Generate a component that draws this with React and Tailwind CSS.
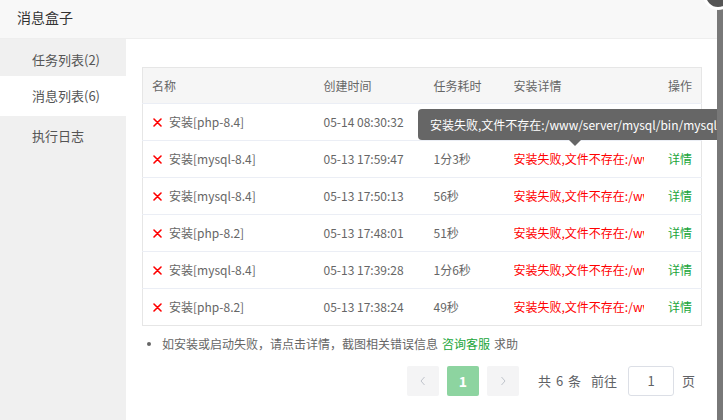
const rows = [
  { name: '安装[php-8.4]', time: '05-14 08:30:32', cost: '2秒' },
  { name: '安装[mysql-8.4]', time: '05-13 17:59:47', cost: '1分3秒' },
  { name: '安装[mysql-8.4]', time: '05-13 17:50:13', cost: '56秒' },
  { name: '安装[php-8.2]', time: '05-13 17:48:01', cost: '51秒' },
  { name: '安装[mysql-8.4]', time: '05-13 17:39:28', cost: '1分6秒' },
  { name: '安装[php-8.2]', time: '05-13 17:38:24', cost: '49秒' },
];

const ERR = '安装失败,文件不存在:/www/server/mysql/bin/mysql';

function Cross() {
  return (
    <svg width="9" height="9" viewBox="0 0 9 9" className="shrink-0">
      <path d="M1 1l7 7M8 1l-7 7" stroke="#f00" strokeWidth="1.6" strokeLinecap="round" />
    </svg>
  );
}

export default function App() {
  const font = { fontFamily: '"Noto Sans CJK SC", "Liberation Sans", sans-serif' };
  return (
    <div className="relative w-[723px] h-[420px] flex bg-[#787878] overflow-hidden" style={font}>
      {/* dialog */}
      <div className="relative w-[717px] h-full bg-white flex flex-col overflow-hidden">
        <div className="h-[39px] shrink-0 bg-[#f8f8f8] border-b border-[#eeeeee] flex items-center pl-[17px] pb-[3px] text-[14px] text-[#333]">
          消息盒子
        </div>

        <div className="flex flex-1 min-h-0">
          {/* sidebar */}
          <div className="w-[126px] shrink-0 bg-[#f0f0f0] text-[13px] text-[#555]">
            <div className="h-[37px] flex items-center pl-[32px] pt-[4px]">任务列表(2)</div>
            <div className="h-[40px] flex items-center pl-[32px] bg-white">消息列表(6)</div>
            <div className="h-[40px] flex items-center pl-[32px]">执行日志</div>
          </div>

          {/* content */}
          <div className="flex-1 pl-[16px] pr-[15px] pt-[28px]">
            <table className="w-[559px] table-fixed border-collapse border border-[#e6e6e6] text-[12px] text-[#666]">
              <colgroup>
                <col className="w-[172px]" />
                <col className="w-[110px]" />
                <col className="w-[80px]" />
                <col className="w-[148px]" />
                <col className="w-[49px]" />
              </colgroup>
              <thead>
                <tr className="h-[36px] bg-[#f6f6f6]">
                  <th className="text-left font-normal pl-[9px]">名称</th>
                  <th className="text-left font-normal pl-[9px]">创建时间</th>
                  <th className="text-left font-normal pl-[9px]">任务耗时</th>
                  <th className="text-left font-normal pl-[9px]">安装详情</th>
                  <th className="text-right font-normal pr-[9px]">操作</th>
                </tr>
              </thead>
              <tbody>
                {rows.map((r, i) => (
                  <tr key={i} className="h-[37px] border-t border-[#ebeef5]">
                    <td className="pl-[10px]">
                      <div className="flex items-center gap-[7px]">
                        <Cross />
                        <span>{r.name}</span>
                      </div>
                    </td>
                    <td className="pl-[9px] whitespace-nowrap">{r.time}</td>
                    <td className="pl-[9px]">{r.cost}</td>
                    <td className="pl-[9px] pr-[9px]">
                      <div className="overflow-hidden whitespace-nowrap text-[#ff0000]">{ERR}</div>
                    </td>
                    <td className="text-right pr-[9px] text-[#20a53a]">详情</td>
                  </tr>
                ))}
              </tbody>
            </table>

            <div className="mt-[10px] flex items-center h-[16px] text-[12px] text-[#666] pl-[5px]">
              <span className="w-[4px] h-[4px] rounded-full bg-[#666] mr-[11px]" />
              <span>如安装或启动失败，请点击详情，截图相关错误信息</span>
              <span className="text-[#20a53a] ml-[4px]">咨询客服</span>
              <span className="ml-[4px]">求助</span>
            </div>

            <div className="mt-[14px] flex items-center h-[30px] text-[13px] text-[#606266] pl-[265px]">
              <div className="w-[32px] h-[30px] rounded-[2px] bg-[#f4f4f5] flex items-center justify-center text-[#c0c4cc]">
                <svg width="8" height="10" viewBox="0 0 8 10"><path d="M5.5 1L2 5l3.5 4" fill="none" stroke="currentColor" strokeWidth="1" /></svg>
              </div>
              <div className="ml-[8px] w-[32px] h-[30px] rounded-[2px] bg-[#8dd4a0] flex items-center justify-center text-white font-bold text-[14px]">1</div>
              <div className="ml-[8px] w-[32px] h-[30px] rounded-[2px] bg-[#f4f4f5] flex items-center justify-center text-[#c0c4cc]">
                <svg width="8" height="10" viewBox="0 0 8 10"><path d="M2.5 1L6 5l-3.5 4" fill="none" stroke="currentColor" strokeWidth="1" /></svg>
              </div>
              <span className="ml-[19px] whitespace-pre tracking-[1px]">共 6 条</span>
              <span className="ml-[9px]">前往</span>
              <div className="ml-[11px] w-[46px] h-[30px] rounded-[3px] border border-[#dcdfe6] flex items-center justify-center">1</div>
              <span className="ml-[8px]">页</span>
            </div>
          </div>
        </div>

        {/* tooltip */}
        <div className="absolute left-[418px] top-[109px] h-[31px] pl-[12px] pr-[12px] rounded-[4px] bg-[#666666] text-white text-[12px] flex items-center whitespace-nowrap">
          {ERR}
          <span className="absolute left-[151px] top-[31px] w-0 h-0 border-x-[6px] border-x-transparent border-t-[6px] border-t-[#666666]" />
        </div>
      </div>

      {/* close button of the layer */}
      <div className="absolute left-[703px] top-[-20px] w-[30px] h-[30px] rounded-full bg-[#555] border-[3px] border-white" />
    </div>
  );
}
